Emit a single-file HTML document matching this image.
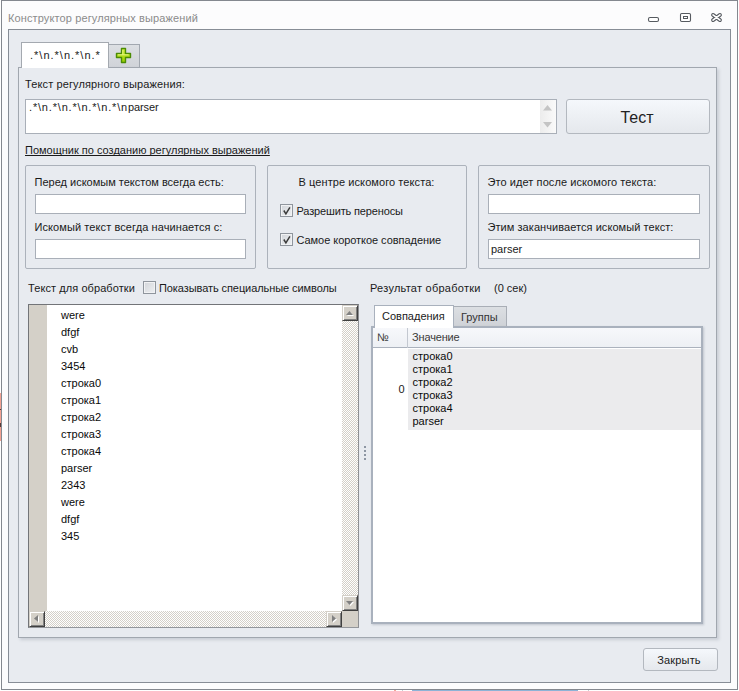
<!DOCTYPE html>
<html><head><meta charset="utf-8">
<style>
*{box-sizing:border-box;margin:0;padding:0}
html,body{width:739px;height:691px;overflow:hidden;background:#fff}
body{font-family:"Liberation Sans",sans-serif;font-size:11px;color:#1a1a1a;position:relative}
.abs{position:absolute}
.t{position:absolute;white-space:nowrap;line-height:13px;height:13px}
#win{left:1px;top:0;width:737px;height:690px;border:1px solid #84888f;background:#fcfcfd}
#panel{left:8px;top:29px;width:723px;height:654px;border:1px solid #878d96;background:#e8ebf0}
#page{left:18px;top:67px;width:699px;height:571px;border:1px solid #a1a7af;background:#e8ebf0;box-shadow:2px 2px 3px rgba(120,130,145,.27)}
.inp{position:absolute;background:#fff;border:1px solid #a9afb8;height:20px}
.grp{position:absolute;border:1px solid #acb2bb;border-radius:2px}
.btn{position:absolute;border:1px solid #b3b8bf;border-radius:3px;background:linear-gradient(#f5f8fc,#eceff3 55%,#e5e8ed);text-align:center}
.cb{position:absolute;width:13px;height:13px;border:1px solid #8f959d;background:linear-gradient(135deg,#d2d5da,#eef0f2);box-shadow:inset 0 0 0 1px #f1f2f4}

.sb{position:absolute;width:16px;height:16px;background:#d4d0c8;border:1px solid;border-color:#d4d0c8 #404040 #404040 #d4d0c8;box-shadow:inset 1px 1px 0 #fff,inset -1px -1px 0 #808080}
.sb svg{position:absolute;left:0;top:0}
.dith{position:absolute;background-image:conic-gradient(#fff 25%,#d4d0c8 0 50%,#fff 0 75%,#d4d0c8 0);background-size:2px 2px}
.ln{color:#0a0a0a;position:absolute;left:61px;white-space:nowrap;line-height:13px;height:13px}
.rl{color:#0a0a0a;position:absolute;left:412.5px;white-space:nowrap;line-height:13px;height:13px}
</style></head><body>
<div id="win" class="abs"></div>
<div class="abs" style="left:0;top:393px;width:1px;height:48px;background:#f3a192"></div>
<div class="abs" style="left:0;top:409px;width:1px;height:1px;background:#5a3a36"></div>
<div class="abs" style="left:0;top:423px;width:1px;height:4px;background:#5a3a36"></div>
<div class="abs" style="left:412px;top:690px;width:166px;height:1px;background:#8db3d6"></div>
<div class="abs" style="left:394px;top:690px;width:2px;height:1px;background:#f0a79c"></div>
<div class="abs" style="left:402px;top:690px;width:1px;height:1px;background:#c8ccd2"></div>
<div class="abs" style="left:588px;top:690px;width:1px;height:1px;background:#c8ccd2"></div>
<div class="t" style="left:8px;top:12px;color:#8b8b8b;font-size:11px;letter-spacing:0.12px">Конструктор регулярных выражений</div>
<div id="panel" class="abs"></div>
<svg class="abs" style="left:640px;top:5px" width="90" height="24">
<rect x="8.5" y="12.5" width="10" height="4" rx="1.5" fill="#fff" stroke="#565a60" stroke-width="1.1"/>
<rect x="40.5" y="8.5" width="10" height="8" rx="1.2" fill="#fff" stroke="#565a60" stroke-width="1.1"/>
<rect x="43.5" y="11.5" width="4" height="2" fill="#fff" stroke="#565a60" stroke-width="1"/>
<path d="M73 9.9 L80 15.1 M80 9.9 L73 15.1" fill="none" stroke="#565a60" stroke-width="3.8" stroke-linecap="round"/><path d="M73 9.9 L80 15.1 M80 9.9 L73 15.1" fill="none" stroke="#fff" stroke-width="1.7" stroke-linecap="round"/>
</svg>


<!-- tabs -->
<div class="abs" style="left:108px;top:44px;width:32px;height:24px;border:1px solid #a2a8b0;background:linear-gradient(#dcdfe3,#d0d3d8)"></div>
<svg class="abs" style="left:115px;top:47px" width="17" height="17"><defs><linearGradient id="pg" x1="0" y1="0" x2="0" y2="1"><stop offset="0" stop-color="#cfee3a"/><stop offset="1" stop-color="#98d000"/></linearGradient></defs><path d="M6.5 1.5 H10.5 V6.5 H15.5 V10.5 H10.5 V15.5 H6.5 V10.5 H1.5 V6.5 H6.5Z" fill="url(#pg)" stroke="#4b8c04" stroke-width="1.4" stroke-linejoin="round"/><path d="M7.8 2.8 V7.8 H2.8 M7.8 7.8 H13.6" fill="none" stroke="#ecfa90" stroke-width="1" opacity=".85"/></svg>
<div id="page" class="abs"></div>
<div class="abs" style="left:21px;top:42px;width:88px;height:26px;border:1px solid #a4a9b0;border-bottom:none;background:#fff"></div>
<div class="t" style="left:30px;top:49px;letter-spacing:1.0px">.*\n.*\n.*\n.*</div>

<!-- regex -->
<div class="t" style="left:25px;top:78px;letter-spacing:0.12px">Текст регулярного выражения:</div>
<div class="inp" style="left:25px;top:99px;width:532px;height:35px"></div>
<div class="abs" style="left:540px;top:100px;width:16px;height:33px;background:linear-gradient(90deg,#ececec,#fafafa)"></div>
<svg class="abs" style="left:540px;top:100px" width="16" height="33"><path d="M3 10.5 L12 10.5 L7.5 5Z" fill="#c4c4c4"/><path d="M3 22 L12 22 L7.5 27.5Z" fill="#c4c4c4"/></svg>
<div class="t" style="left:29px;top:101px"><span style="letter-spacing:0.82px">.*\n.*\n.*\n.*\n.*\n</span><span style="letter-spacing:-0.1px">parser</span></div>
<div class="btn" style="left:566px;top:99px;width:144px;height:35px;font-size:16px;line-height:36px;padding-right:2px;color:#222">Тест</div>
<div class="t" style="left:25px;top:144px;text-decoration:underline;text-decoration-skip-ink:none">Помощник по созданию регулярных выражений</div>

<!-- groups -->
<div class="grp" style="left:25px;top:165px;width:231px;height:104px"></div>
<div class="t" style="left:34.5px;top:176px">Перед искомым текстом всегда есть:</div>
<div class="inp" style="left:35px;top:194px;width:211px"></div>
<div class="t" style="left:34.5px;top:221px;letter-spacing:0.09px">Искомый текст всегда начинается с:</div>
<div class="inp" style="left:35px;top:239px;width:211px"></div>

<div class="grp" style="left:267px;top:165px;width:200px;height:104px"></div>
<div class="t" style="left:298.5px;top:176px;letter-spacing:0.08px">В центре искомого текста:</div>
<div class="cb" style="left:280px;top:204px"></div>
<svg class="abs" style="left:280px;top:204px" width="13" height="13"><path d="M3.8 6.5 L5.9 9.8 L9.9 3.4" fill="none" stroke="#3a3a3a" stroke-width="1.5"/></svg>
<div class="t" style="left:296.5px;top:205px;letter-spacing:-0.15px">Разрешить переносы</div>
<div class="cb" style="left:280px;top:233px"></div>
<svg class="abs" style="left:280px;top:233px" width="13" height="13"><path d="M3.8 6.5 L5.9 9.8 L9.9 3.4" fill="none" stroke="#3a3a3a" stroke-width="1.5"/></svg>
<div class="t" style="left:296.5px;top:234px;letter-spacing:-0.05px">Самое короткое совпадение</div>

<div class="grp" style="left:478px;top:165px;width:232px;height:104px"></div>
<div class="t" style="left:487.5px;top:176px;letter-spacing:0.08px">Это идет после искомого текста:</div>
<div class="inp" style="left:488px;top:194px;width:212px"></div>
<div class="t" style="left:487.5px;top:221px;letter-spacing:0.06px">Этим заканчивается искомый текст:</div>
<div class="inp" style="left:488px;top:239px;width:212px"></div>
<div class="t" style="left:491px;top:243px">parser</div>

<!-- lower labels -->
<div class="t" style="left:28px;top:282px;letter-spacing:0.08px">Текст для обработки</div>
<div class="cb" style="left:143px;top:281px"></div>
<div class="t" style="left:159px;top:282px;letter-spacing:-0.08px">Показывать специальные символы</div>
<div class="t" style="left:370px;top:282px;letter-spacing:0.25px">Результат обработки</div>
<div class="t" style="left:494px;top:282px">(0 сек)</div>

<!-- text area -->
<div class="abs" id="ta" style="left:28px;top:304px;width:331px;height:324px;border:1px solid;border-color:#727478 #8d8f93 #93969b #727478;background:#fff"></div>
<div class="abs" style="left:29px;top:305px;width:18px;height:306px;background:#d4d0c8"></div>
<div class="dith" style="left:342px;top:321px;width:16px;height:274px"></div>
<div class="dith" style="left:45px;top:611px;width:281px;height:16px"></div>
<div class="abs" style="left:342px;top:611px;width:16px;height:16px;background:#d4d0c8"></div>
<div class="sb" style="left:342px;top:305px"><svg width="14" height="14"><path d="M4 10 L11 10 L7.5 6Z" fill="#fff"/><path d="M3 9 L10 9 L6.5 5Z" fill="#808080"/></svg></div>
<div class="sb" style="left:342px;top:595px"><svg width="14" height="14"><path d="M4 6 L11 6 L7.5 10Z" fill="#fff"/><path d="M3 5 L10 5 L6.5 9Z" fill="#808080"/></svg></div>
<div class="sb" style="left:29px;top:611px"><svg width="14" height="14"><path d="M9 4 L9 11 L5 7.5Z" fill="#fff"/><path d="M8 3 L8 10 L4 6.5Z" fill="#808080"/></svg></div>
<div class="sb" style="left:326px;top:611px"><svg width="14" height="14"><path d="M6 4 L6 11 L10 7.5Z" fill="#fff"/><path d="M5 3 L5 10 L9 6.5Z" fill="#808080"/></svg></div>
<div class="ln" style="top:309px">were</div>
<div class="ln" style="top:326px">dfgf</div>
<div class="ln" style="top:343px">cvb</div>
<div class="ln" style="top:360px">3454</div>
<div class="ln" style="top:377px">строка0</div>
<div class="ln" style="top:394px">строка1</div>
<div class="ln" style="top:411px">строка2</div>
<div class="ln" style="top:428px">строка3</div>
<div class="ln" style="top:445px">строка4</div>
<div class="ln" style="top:462px">parser</div>
<div class="ln" style="top:479px">2343</div>
<div class="ln" style="top:496px">were</div>
<div class="ln" style="top:513px">dfgf</div>
<div class="ln" style="top:530px">345</div>

<!-- results -->
<div class="abs" style="left:364px;top:446px;width:2px;height:2px;background:#8d96a3"></div><div class="abs" style="left:364px;top:450px;width:2px;height:2px;background:#8d96a3"></div><div class="abs" style="left:364px;top:454px;width:2px;height:2px;background:#8d96a3"></div><div class="abs" style="left:364px;top:458px;width:2px;height:2px;background:#8d96a3"></div>
<div class="abs" style="left:453px;top:306px;width:54px;height:21px;border:1px solid #a9aeb6;background:linear-gradient(#dcdfe3,#cfd2d7)"></div>
<div class="t" style="left:461px;top:311px;color:#333">Группы</div>
<div class="abs" id="res" style="left:371px;top:326px;width:332px;height:298px;border:2px solid #a9b1bd;background:#fff;box-shadow:1px 1px 2px rgba(120,130,145,.35)"></div>
<div class="abs" style="left:374px;top:305px;width:80px;height:23px;border:1px solid #a9b1bd;border-bottom:none;background:#fff"></div>
<div class="t" style="left:382px;top:310px">Совпадения</div>
<div class="abs" style="left:373px;top:328px;width:328px;height:20px;background:linear-gradient(#f7f8fb,#edf0f4);border-bottom:1px solid #abb2bd"></div>
<div class="abs" style="left:407px;top:328px;width:1px;height:20px;background:#c3c8d0"></div>
<div class="t" style="left:377px;top:331px;color:#3a3a3a">№</div>
<div class="t" style="left:412px;top:331px;letter-spacing:-0.15px;color:#3a3a3a">Значение</div>
<div class="abs" style="left:408px;top:349px;width:293px;height:81px;background:#ebebed"></div>
<div class="t" style="left:398.5px;top:383px">0</div>
<div class="rl" style="top:350px">строка0</div>
<div class="rl" style="top:363px">строка1</div>
<div class="rl" style="top:376px">строка2</div>
<div class="rl" style="top:389px">строка3</div>
<div class="rl" style="top:402px">строка4</div>
<div class="rl" style="top:415px">parser</div>

<div class="btn" style="left:643px;top:648px;width:75px;height:23px;line-height:22px;padding-right:3px;letter-spacing:0.15px">Закрыть</div>
</body></html>
